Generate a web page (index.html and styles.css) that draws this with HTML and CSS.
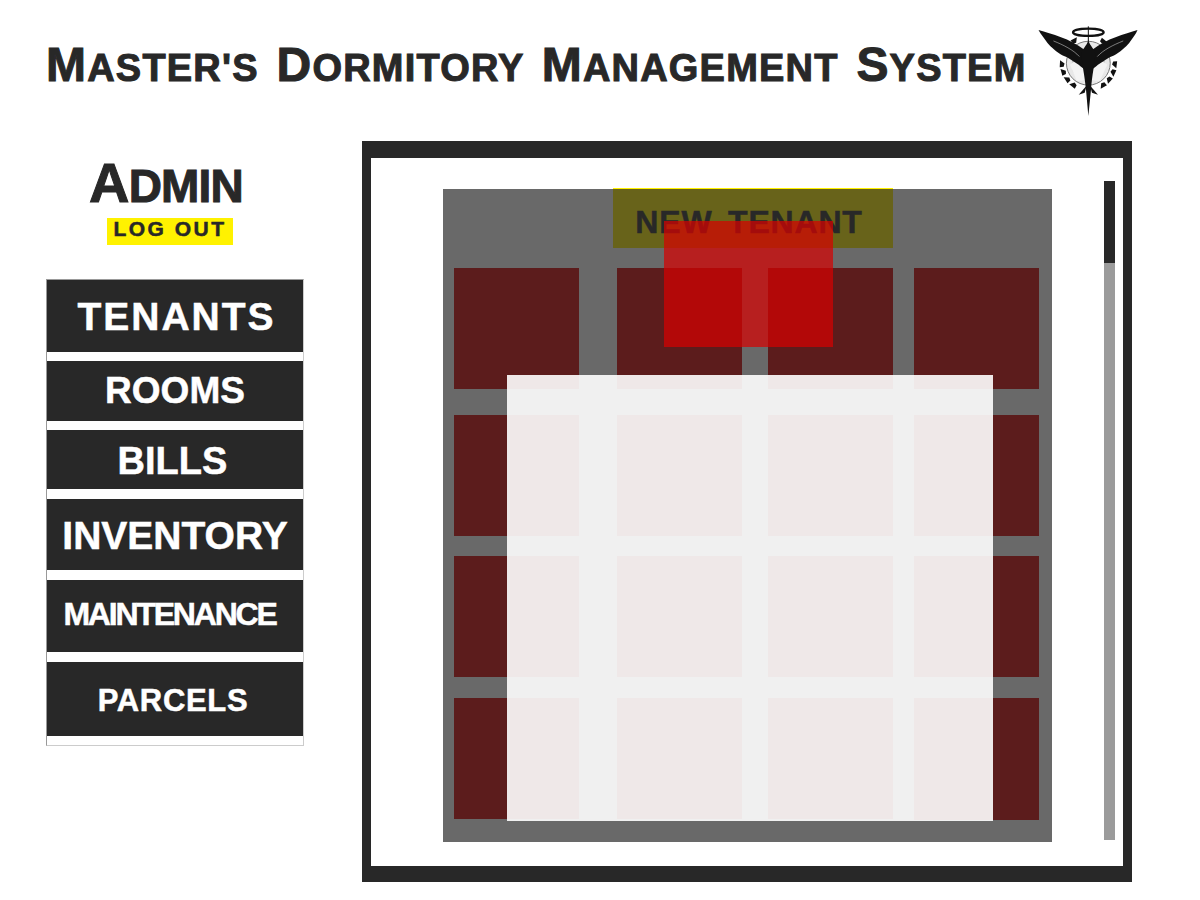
FILE: index.html
```html
<!DOCTYPE html>
<html>
	<head>
		<meta charset="UTF-8">
		<title>Master's Dormitory Management System</title>
		<link rel="stylesheet" href="styles.css">
	</head>
	<body>
		<header id="top">
			<h1><span class="cap">M</span>aster's <span class="cap">D</span>ormitory <span class="cap">M</span>anagement <span class="cap">S</span>ystem</h1>
			<svg id="logo" viewBox="48 30 312 280" width="104" height="93">
				<defs>
					<path id="leaf" d="M205 58 L226 62 L214 74 L205 70 Z"/>
				</defs>
				<circle cx="205" cy="145" r="66" fill="#e8e8e8" stroke="#777" stroke-width="3"/>
				<circle cx="205" cy="150" r="50" fill="#bdbdbd"/>
				<path d="M150 150 C170 125 240 125 262 150 L240 198 L170 198 Z" fill="#f4f4f4"/>
				<g fill="#111">
					<use href="#leaf" transform="rotate(-38 205 145)"/>
					<use href="#leaf" transform="rotate(-56 205 145)"/>
					<use href="#leaf" transform="rotate(-98 205 145)"/>
					<use href="#leaf" transform="rotate(-116 205 145)"/>
					<use href="#leaf" transform="rotate(-134 205 145)"/>
					<use href="#leaf" transform="rotate(-152 205 145)"/>
					<use href="#leaf" transform="rotate(28 205 145)"/>
					<use href="#leaf" transform="rotate(46 205 145)"/>
					<use href="#leaf" transform="rotate(86 205 145)"/>
					<use href="#leaf" transform="rotate(104 205 145)"/>
					<use href="#leaf" transform="rotate(122 205 145)"/>
					<use href="#leaf" transform="rotate(140 205 145)"/>
					<path d="M55 45 C95 58 150 70 192 104 L200 172 C192 160 184 158 176 150 C160 140 146 128 128 122 C110 112 92 96 82 84 C72 70 62 58 55 45 Z"/>
					<path d="M353 45 C315 58 260 70 218 104 L210 172 C218 160 226 158 234 150 C250 140 264 128 282 122 C300 112 318 96 328 84 C338 70 348 58 353 45 Z"/>
					<path d="M205 75 C210 95 224 100 226 118 C224 150 216 180 213 225 L205 304 L198 225 C194 180 186 150 184 118 C186 100 200 95 205 75 Z"/>
					<path d="M176 240 L200 212 L194 234 Z"/>
					<path d="M234 240 L210 212 L216 234 Z"/>
				</g>
				<g fill="none" stroke="#e8e8e8" stroke-width="1.5">
					<path d="M100 78 C130 90 160 105 178 125"/>
					<path d="M310 78 C280 90 250 105 232 125"/>
				</g>
				<ellipse cx="205" cy="52" rx="46" ry="11" fill="none" stroke="#111" stroke-width="7"/>
				<path d="M205 34 L205 80" stroke="#111" stroke-width="3"/>
			</svg>
		</header>
		<div id="main">
			<aside id="side">
				<div id="user">
					<h2><span class="cap">A</span>dmin</h2>
					<a class="logout" href="javascript:void(0);">Log out</a>
				</div>
				<ul id="menu">
					<li class="tenants">Tenants</li>
					<li class="rooms">Rooms</li>
					<li class="bills">Bills</li>
					<li class="inventory">Inventory</li>
					<li class="maintenance">Maintenance</li>
					<li class="parcels">Parcels</li>
				</ul>
			</aside>
			<section id="frame">
				<div id="panel">
					<a class="new-tenant" href="javascript:void(0);">New Tenant</a>
					<div id="tiles">
						<div class="tile"></div>
						<div class="tile"></div>
						<div class="tile"></div>
						<div class="tile"></div>
						<div class="tile"></div>
						<div class="tile"></div>
						<div class="tile"></div>
						<div class="tile"></div>
						<div class="tile"></div>
						<div class="tile"></div>
						<div class="tile"></div>
						<div class="tile"></div>
						<div class="tile"></div>
						<div class="tile"></div>
						<div class="tile"></div>
						<div class="tile last"></div>
					</div>
					<div class="red-box"></div>
					<div class="white-box"></div>
				</div>
				<div id="scrollbar"><div class="thumb"></div></div>
			</section>
		</div>
	</body>
</html>
```

FILE: styles.css
```css
* {
	margin: 0;
	padding: 0;
	box-sizing: border-box;
}
body {
	background-color: white;
	color: #282828;
	font-family: "Liberation Sans", Arial, sans-serif;
	font-weight: bold;
	text-transform: uppercase;
}
a {
	text-decoration: none;
	color: inherit;
}
#top {
	display: flex;
	align-items: flex-start;
	height: 141px;
	padding-left: 46px;
}
#top h1 {
	width: 990px;
	margin-top: 42px;
	font-size: 38px;
	line-height: 46px;
	letter-spacing: 1.2px;
	word-spacing: 6px;
	white-space: nowrap;
	-webkit-text-stroke: 1px #282828;
}
#top h1 .cap {
	font-size: 48px;
}
#logo {
	margin-top: 25px;
}
#main {
	display: flex;
	align-items: flex-start;
}
#side {
	width: 362px;
	padding-left: 46px;
}
#user {
	width: 240px;
	margin-top: 17px;
	text-align: center;
}
#user h2 {
	font-size: 46px;
	line-height: 50px;
	letter-spacing: -.8px;
	-webkit-text-stroke: 1px #282828;
}
#user h2 .cap {
	font-size: 56px;
}
.logout {
	display: block;
	width: 126px;
	height: 27px;
	margin: 7px 0 0 61px;
	background-color: #fff200;
	font-size: 21px;
	line-height: 22px;
	letter-spacing: 2.5px;
	-webkit-text-stroke: .5px #282828;
}
#menu {
	width: 258px;
	margin-top: 34px;
	border: 1px solid #ccc;
	border-left-color: #999;
	border-top-color: #999;
	list-style: none;
}
#menu li {
	margin-bottom: 9px;
	background-color: #282828;
	color: white;
	text-align: center;
	-webkit-text-stroke: .5px white;
}
#menu .tenants {
	height: 72px;
	padding-left: 3px;
	font-size: 39px;
	line-height: 73px;
	letter-spacing: 2px;
}
#menu .rooms {
	height: 60px;
	font-size: 37px;
	line-height: 60px;
}
#menu .bills {
	height: 59px;
	margin-bottom: 10px;
	padding-right: 5px;
	font-size: 38px;
	line-height: 62px;
}
#menu .inventory {
	height: 71px;
	margin-bottom: 10px;
	font-size: 39px;
	line-height: 73px;
}
#menu .maintenance {
	height: 72px;
	margin-bottom: 10px;
	padding-right: 11px;
	font-size: 32px;
	line-height: 68px;
	letter-spacing: -2.2px;
}
#menu .parcels {
	height: 74px;
	padding-right: 4px;
	font-size: 31px;
	line-height: 78px;
	letter-spacing: .7px;
}
#frame {
	display: flex;
	align-items: flex-start;
	width: 770px;
	height: 741px;
	border-style: solid;
	border-color: #282828;
	border-width: 17px 9px 16px 9px;
}
#panel {
	position: relative;
	width: 609px;
	height: 653px;
	margin: 31px 0 0 72px;
	background-color: #696969;
}
.new-tenant {
	display: block;
	width: 280px;
	height: 60px;
	margin: -1px 0 0 170px;
	padding: 2px 8px 0 0;
	border-top: 1px solid #fff200;
	background-color: #68631a;
	font-size: 32px;
	line-height: 62px;
	text-align: center;
	letter-spacing: .8px;
	word-spacing: 6px;
	-webkit-text-stroke: .5px #282828;
}
#tiles {
	display: grid;
	grid-template-columns: 163px 151px 146px 125px;
	grid-template-rows: 147px 141px 142px 122px;
	margin: 20px 0 0 11px;
}
.tile {
	width: 125px;
	height: 121px;
	background-color: #5c1c1c;
}
.tile.last {
	height: 122px;
}
.red-box {
	position: absolute;
	left: 221px;
	top: 32px;
	width: 169px;
	height: 126px;
	background-color: rgba(216, 0, 0, .7);
}
.white-box {
	position: absolute;
	left: 64px;
	top: 186px;
	width: 486px;
	height: 446px;
	background-color: rgba(255, 255, 255, .9);
}
#scrollbar {
	width: 11px;
	height: 659px;
	margin: 23px 0 0 52px;
	background-color: #9b9b9b;
}
#scrollbar .thumb {
	height: 82px;
	background-color: #282828;
}
```
